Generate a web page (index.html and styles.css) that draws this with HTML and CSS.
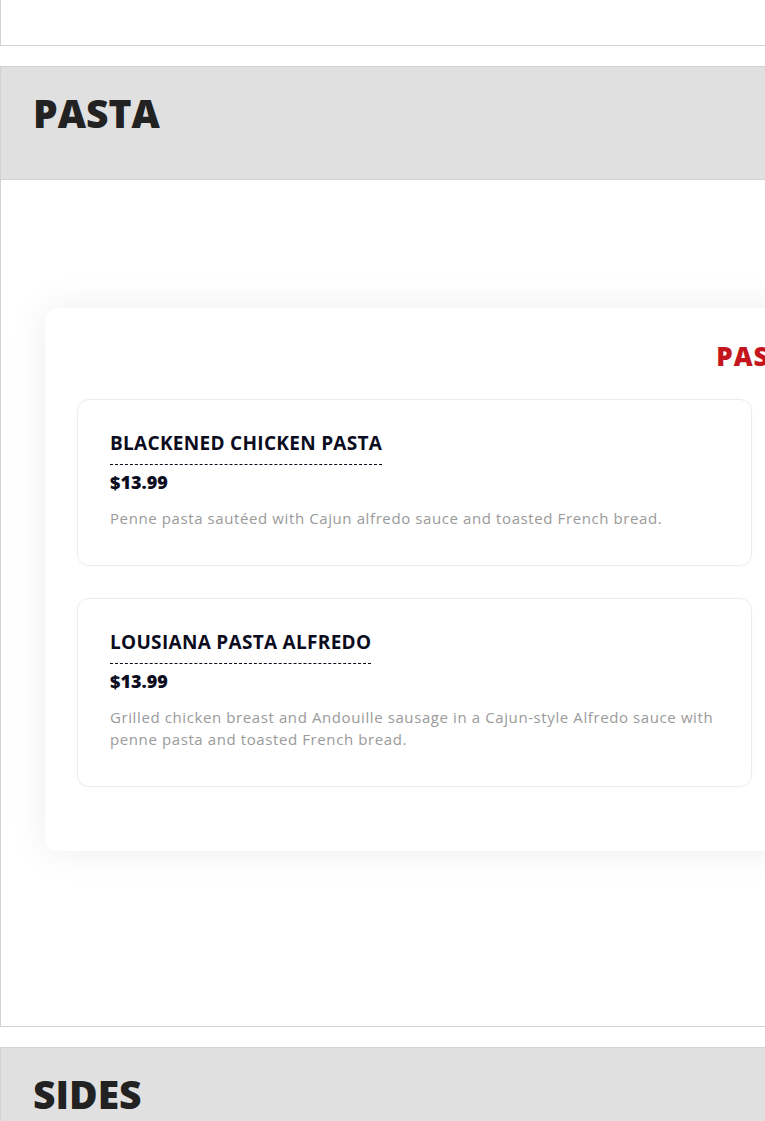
FILE: index.html
```html
<!DOCTYPE html>
<html lang="en">
<head>
    <meta charset="UTF-8">
    <meta name="viewport" content="width=device-width, initial-scale=1.0">
    <title>Menu</title>
    <link rel="stylesheet" href="styles.css">
</head>
<body>
    <!-- Конец предыдущей категории -->
    <div class="category-body category-body-prev"></div>

    <!-- Категория: паста -->
    <div class="category">
        <div class="category-header">
            <h2>PASTA</h2>
        </div>
        <div class="category-body">
            <div class="menu-card">
                <h3 class="menu-card-title">PASTA</h3>
                <div class="menu-grid">
                    <div class="menu-column">
                        <div class="menu-item">
                            <div class="item-name">BLACKENED CHICKEN PASTA</div>
                            <div class="item-price">$13.99</div>
                            <p class="item-desc">Penne pasta sautéed with Cajun alfredo sauce and toasted French bread.</p>
                        </div>
                        <div class="menu-item">
                            <div class="item-name">LOUSIANA PASTA ALFREDO</div>
                            <div class="item-price">$13.99</div>
                            <p class="item-desc">Grilled chicken breast and Andouille sausage in a Cajun-style Alfredo sauce with penne pasta and toasted French bread.</p>
                        </div>
                    </div>
                    <div class="menu-column"></div>
                </div>
            </div>
        </div>
    </div>

    <!-- Категория: гарниры -->
    <div class="category">
        <div class="category-header">
            <h2>SIDES</h2>
        </div>
    </div>
</body>
</html>
```

FILE: styles.css
```css
body {
    margin: 0;
    padding: 0;
    font-family: 'Open Sans', 'Noto Sans', sans-serif;
    background: #ffffff;
    color: #222222;
}

/* Категория */
.category {
    margin-top: 20px;
}

.category-header {
    background-color: #e0e0e0;
    border: 1px solid #d2d2d2;
    border-right: none;
    padding: 14px 32px 34px;
}

.category-header h2 {
    margin: 0;
    font-size: 39px;
    line-height: 64px;
    font-weight: 800;
    color: #222222;
}

.category-body {
    border-left: 1px solid #d2d2d2;
    border-bottom: 1px solid #d2d2d2;
    padding: 128px 0 175px 44px;
}

.category-body-prev {
    height: 46px;
    padding: 0;
    box-sizing: border-box;
}

/* Карточка с блюдами */
.menu-card {
    width: 1432px;
    box-sizing: border-box;
    background-color: #ffffff;
    border-radius: 12px;
    box-shadow: 0 0 40px rgba(0, 0, 0, 0.07);
    padding: 32px 32px 32px;
}

.menu-card-title {
    margin: 0 0 27px;
    text-align: center;
    font-size: 26px;
    line-height: 32px;
    font-weight: 800;
    letter-spacing: 1px;
    color: #c4161c;
}

.menu-grid {
    display: grid;
    grid-template-columns: 675px 675px;
    gap: 18px;
}

.menu-item {
    border: 1px solid #ececec;
    border-radius: 12px;
    padding: 30px 32px 36px;
    margin-bottom: 32px;
    box-shadow: 0 0 3px rgba(0, 0, 0, 0.03);
}

.item-name {
    display: inline-block;
    font-size: 19px;
    line-height: 26px;
    font-weight: 700;
    letter-spacing: 0.3px;
    color: #0b0c1e;
    border-bottom: 1px dashed #0b0c1e;
    padding-bottom: 8px;
}

.item-price {
    margin-top: 4px;
    font-size: 18px;
    line-height: 26px;
    font-weight: 800;
    color: #0b0c1e;
}

.item-desc {
    margin: 12px 0 0;
    font-size: 15px;
    line-height: 22px;
    letter-spacing: 0.6px;
    color: #9a9a9a;
}
```
